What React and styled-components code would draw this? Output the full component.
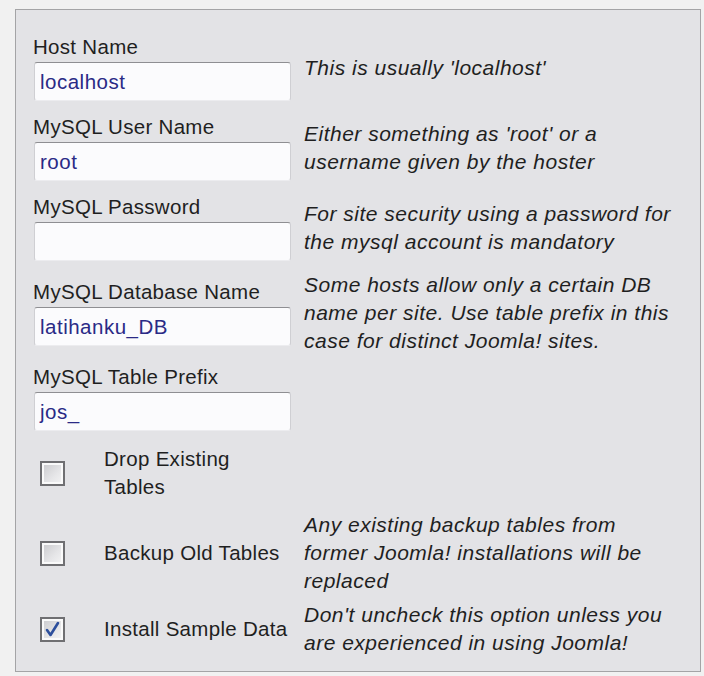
import React from "react";
import styled, { createGlobalStyle } from "styled-components";

const GlobalStyle = createGlobalStyle`
  html, body { margin: 0; padding: 0; background: #f1f1f1; }
  body { font-family: "Liberation Sans", Arial, sans-serif; }
`;

const Page = styled.div`
  width: 704px;
  height: 676px;
  box-sizing: border-box;
  padding: 9px 3px 4px 15px;
  background: #f1f1f1;
`;

const Panel = styled.div`
  height: 100%;
  box-sizing: border-box;
  border: 1px solid #a4a4a6;
  background: #e3e3e6;
  padding: 25px 0 0 17px;
  display: grid;
  grid-template-columns: 258px 1fr;
  column-gap: 13px;
  row-gap: 14px;
  align-content: start;
  align-items: center;
  color: #1f1f1f;
`;

const Field = styled.div`
  display: flex;
  flex-direction: column;
`;

const Label = styled.div`
  font-size: 20.5px;
  letter-spacing: 0.3px;
  line-height: 24px;
  margin-bottom: 3px;
`;

const Input = styled.div`
  width: 257px;
  height: 39px;
  box-sizing: border-box;
  margin-left: 1px;
  border: 1px solid #cfcfd3;
  border-top-color: #8e8e92;
  border-bottom-color: #ececef;
  border-radius: 3px;
  background: #fbfbfd;
  padding-left: 5px;
  display: flex;
  align-items: center;
  font-size: 20.5px;
  letter-spacing: 0.5px;
  color: #2a2a86;
`;

const Help = styled.div`
  font-style: italic;
  font-size: 21px;
  letter-spacing: 0.5px;
  line-height: 28px;
  margin: -4px 0;
  color: #1f1f1f;
`;

const CheckField = styled.div`
  display: flex;
  align-items: center;
  padding-left: 7px;
`;

const Box = styled.div`
  width: 25px;
  height: 25px;
  box-sizing: border-box;
  flex: none;
  margin-right: 39px;
  border: 2px solid #6f6f72;
  box-shadow: inset 0 0 0 2px #fafafa;
  background: linear-gradient(135deg, #c9c9cc 0%, #e6e6e8 60%, #f4f4f5 100%);
  display: flex;
  align-items: center;
  justify-content: center;
`;

const CheckLabel = styled.div`
  width: 187px;
  font-size: 20.5px;
  letter-spacing: 0.3px;
  line-height: 28px;
`;

const fields = [
  { label: "Host Name", value: "localhost", help: ["This is usually 'localhost'"] },
  { label: "MySQL User Name", value: "root", help: ["Either something as 'root' or a", "username given by the hoster"] },
  { label: "MySQL Password", value: "", help: ["For site security using a password for", "the mysql account is mandatory"] },
  {
    label: "MySQL Database Name",
    value: "latihanku_DB",
    help: ["Some hosts allow only a certain DB", "name per site. Use table prefix in this", "case for distinct Joomla! sites."],
  },
  { label: "MySQL Table Prefix", value: "jos_", help: [] },
];

const checks = [
  { label: "Drop Existing Tables", checked: false, help: [] },
  {
    label: "Backup Old Tables",
    checked: false,
    help: ["Any existing backup tables from", "former Joomla! installations will be", "replaced"],
  },
  {
    label: "Install Sample Data",
    checked: true,
    help: ["Don't uncheck this option unless you", "are experienced in using Joomla!"],
  },
];

const HelpText = ({ lines }) => (
  <Help>
    {lines.map((l, i) => (
      <React.Fragment key={i}>
        {l}
        {i < lines.length - 1 && <br />}
      </React.Fragment>
    ))}
  </Help>
);

const Check = () => (
  <svg width="17" height="17" viewBox="0 0 17 17">
    <path d="M3 9 L6.5 14 L14 2" fill="none" stroke="#2d4f9c" strokeWidth="2.6" strokeLinecap="round" strokeLinejoin="round" />
  </svg>
);

export default function App() {
  return (
    <>
      <GlobalStyle />
      <Page>
        <Panel>
          {fields.map((f) => (
            <React.Fragment key={f.label}>
              <Field>
                <Label>{f.label}</Label>
                <Input>{f.value}</Input>
              </Field>
              <HelpText lines={f.help} />
            </React.Fragment>
          ))}
          {checks.map((c) => (
            <React.Fragment key={c.label}>
              <CheckField>
                <Box>{c.checked && <Check />}</Box>
                <CheckLabel>{c.label}</CheckLabel>
              </CheckField>
              <HelpText lines={c.help} />
            </React.Fragment>
          ))}
        </Panel>
      </Page>
    </>
  );
}
